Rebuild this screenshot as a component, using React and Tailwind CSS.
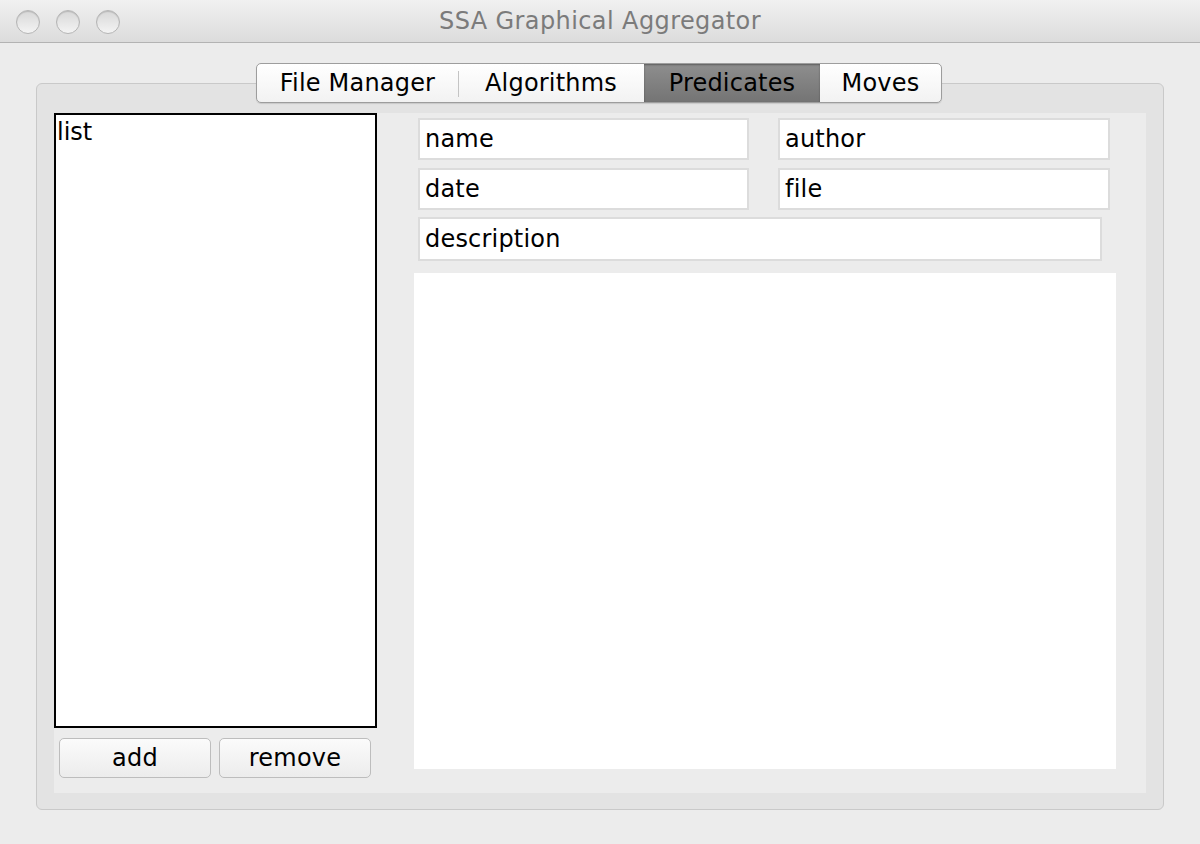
import React from 'react';

const font = { fontFamily: '"DejaVu Sans", "Noto Sans", sans-serif' };

function TrafficLight() {
  return (
    <div className="h-[24px] w-[24px] rounded-full border border-[#b5b5b5] bg-gradient-to-b from-[#d8d8d8] to-[#f4f4f4] shadow-[inset_0_1px_1px_rgba(0,0,0,0.15)]" />
  );
}

function Field({ label, className }) {
  return (
    <div
      className={`flex items-center border-2 border-[#dcdcdc] bg-white pl-[5px] text-[24px] leading-none tracking-[0.2px] text-black ${className}`}
    >
      {label}
    </div>
  );
}

function Tab({ label, active, sep, className }) {
  return (
    <div
      className={`relative flex h-full items-center justify-center ${
        active
          ? 'bg-gradient-to-b from-[#8e8e8e] to-[#747474] shadow-[inset_0_1px_2px_rgba(0,0,0,0.35)]'
          : ''
      } ${className}`}
    >
      {sep ? <span className="absolute left-0 top-[7px] h-[26px] w-px bg-[#c4c4c4]" /> : null}
      {label}
    </div>
  );
}

export default function App() {
  return (
    <div className="h-[844px] w-[1200px] overflow-hidden bg-[#ececec]" style={font}>
      <div className="relative flex h-[43px] items-center border-b border-[#b3b3b3] bg-gradient-to-b from-[#f1f1f1] to-[#dcdcdc]">
        <div className="absolute left-[16px] top-[10px] flex gap-[16px]">
          <TrafficLight />
          <TrafficLight />
          <TrafficLight />
        </div>
        <div className="w-full text-center text-[24px] tracking-[0.4px] text-[#7b7b7b]">SSA Graphical Aggregator</div>
      </div>

      <div className="flex flex-col px-[36px] pt-[20px]">
        <div className="relative z-10 -mb-[20px] flex justify-center pr-[2px]">
          <div className="flex h-[40px] overflow-hidden rounded-[5px] border border-[#9d9d9d] bg-gradient-to-b from-white to-[#f2f2f2] text-[24px] tracking-[0.2px] text-black shadow-[0_1px_1px_rgba(0,0,0,0.12)]">
            <Tab label="File Manager" className="w-[201px]" />
            <Tab label="Algorithms" sep className="w-[186px]" />
            <Tab label="Predicates" active className="w-[176px]" />
            <Tab label="Moves" className="w-[121px]" />
          </div>
        </div>

        <div className="h-[727px] rounded-[6px] border border-[#c9c9c9] bg-[#e3e3e3] px-[17px] pb-[16px] pt-[29px]">
          <div className="flex h-full bg-[#ececec]">
            <div className="flex w-[323px] flex-col">
              <div className="h-[615px] border-2 border-black bg-white pl-[1px] text-[24px] leading-[34px] text-black">
                list
              </div>
              <div className="mt-[10px] flex gap-[8px] pl-[5px]">
                <button
                  type="button"
                  className="h-[40px] w-[152px] rounded-[5px] border border-[#bdbdbd] bg-gradient-to-b from-[#fbfbfb] to-[#ececec] text-[24px] tracking-[0.2px] text-black"
                >
                  add
                </button>
                <button
                  type="button"
                  className="h-[40px] w-[152px] rounded-[5px] border border-[#bdbdbd] bg-gradient-to-b from-[#fbfbfb] to-[#ececec] text-[24px] tracking-[0.2px] text-black"
                >
                  remove
                </button>
              </div>
            </div>

            <div className="ml-[37px] flex w-[702px] flex-col pt-[5px]">
              <div className="flex gap-[29px] pl-[4px]">
                <Field label="name" className="h-[42px] w-[331px]" />
                <Field label="author" className="h-[42px] w-[332px]" />
              </div>
              <div className="mt-[8px] flex gap-[29px] pl-[4px]">
                <Field label="date" className="h-[42px] w-[331px]" />
                <Field label="file" className="h-[42px] w-[332px]" />
              </div>
              <div className="mt-[7px] pl-[4px]">
                <Field label="description" className="h-[44px] w-[684px]" />
              </div>
              <div className="mt-[12px] h-[496px] bg-white" />
            </div>
          </div>
        </div>
      </div>
    </div>
  );
}
